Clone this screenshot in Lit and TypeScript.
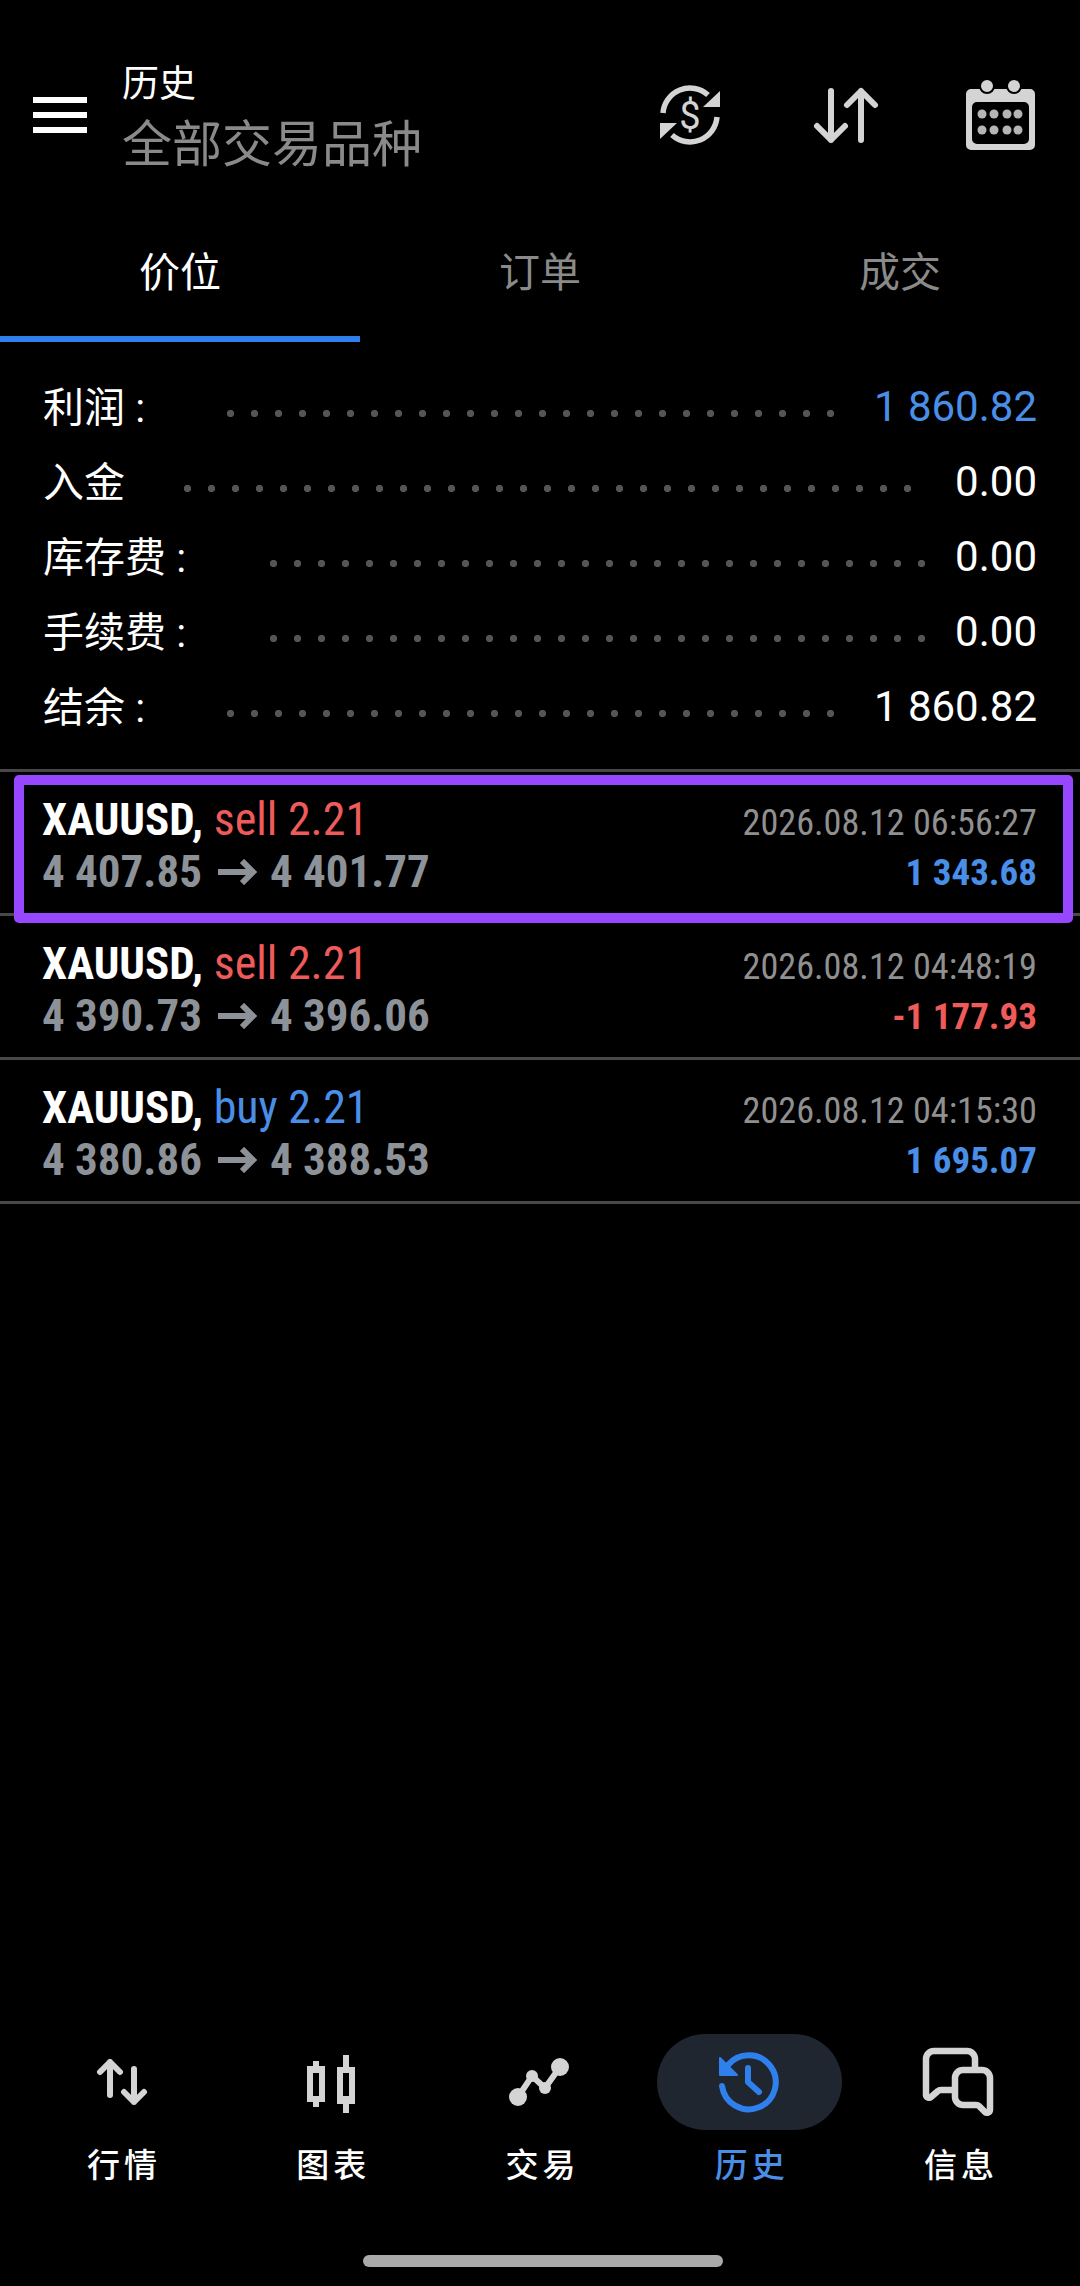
import {LitElement, html, css, svg} from "lit"
import {customElement} from "lit/decorators.js"

const stats = [
	{label: "利润 :", value: "1 860.82", blue: true, from: 227, width: 607},
	{label: "入金", value: "0.00", blue: false, from: 184, width: 727},
	{label: "库存费 :", value: "0.00", blue: false, from: 270, width: 655},
	{label: "手续费 :", value: "0.00", blue: false, from: 270, width: 655},
	{label: "结余 :", value: "1 860.82", blue: false, from: 227, width: 607},
]

const deals = [
	{side: "sell", open: "4 407.85", close: "4 401.77", time: "2026.08.12 06:56:27", profit: "1 343.68", loss: false},
	{side: "sell", open: "4 390.73", close: "4 396.06", time: "2026.08.12 04:48:19", profit: "-1 177.93", loss: true},
	{side: "buy", open: "4 380.86", close: "4 388.53", time: "2026.08.12 04:15:30", profit: "1 695.07", loss: false},
]

const tabs = ["价位", "订单", "成交"]

const navIcons = {
	quotes: svg`<path d="M14 36V3M4 13 14 3 24 13M38 10V43M28 33 38 43 48 33" fill="none" stroke="#d4d4d4" stroke-width="6" stroke-linecap="round" stroke-linejoin="round"/>`,
	charts: svg`<path fill="#d4d4d4" fill-rule="evenodd" d="M6 6H12V11H18V47H12V52H6V47H0V11H6zM6 18V41H12V18zM36 0H42V12H48V49H42V58H36V49H30V12H36zM36 18V41H42V18z"/>`,
	trade: svg`<path d="M11 41 25 20 38 32 53 11" fill="none" stroke="#d4d4d4" stroke-width="6"/><circle cx="11" cy="41" r="9" fill="#d4d4d4"/><circle cx="25" cy="20" r="6" fill="#d4d4d4"/><circle cx="38" cy="32" r="6" fill="#d4d4d4"/><circle cx="53" cy="11" r="9" fill="#d4d4d4"/>`,
	history: svg`<path d="M6 37A27 27 0 1 0 12 16" fill="none" stroke="#2f80ed" stroke-width="6" stroke-linecap="round"/><path d="M4 9V26H21z" fill="#2f80ed" stroke="#2f80ed" stroke-width="2" stroke-linejoin="round"/><path d="M32 19V33L43 43" fill="none" stroke="#2f80ed" stroke-width="6" stroke-linecap="round" stroke-linejoin="round"/>`,
	messages: svg`<path d="M55 25V14a8 8 0 0 0-8-8H14a8 8 0 0 0-8 8V50a3 3 0 0 0 5 2l7-6q1-1 3-1H35" fill="none" stroke="#d4d4d4" stroke-width="6.5" stroke-linejoin="round"/><path d="M43 25H62a8 8 0 0 1 8 8V65a3 3 0 0 1-5 2l-6-6q-1-1-3-1H43a8 8 0 0 1-8-8V33a8 8 0 0 1 8-8z" fill="none" stroke="#d4d4d4" stroke-width="6.5" stroke-linejoin="round"/>`,
}

@customElement("app-root")
export class AppRoot extends LitElement {

	static styles = css`
	:host {
		display: flex;
		flex-direction: column;
		position: relative;
		width: 1080px;
		height: 2286px;
		overflow: hidden;
		background: #000;
		color: #fff;
		font-family: Roboto, "Noto Sans CJK SC", sans-serif;
	}
	.header {
		display: flex;
		align-items: center;
		height: 120px;
		margin-top: 55px;
		padding: 0 44px 0 33px;
	}
	.menu {
		display: flex;
		flex-direction: column;
		gap: 9px;
		width: 54px;
		margin-right: 35px;
	}
	.menu span {
		height: 6px;
		background: #fff;
	}
	.titles {
		flex: 1;
		display: flex;
		flex-direction: column;
		margin-top: 6px;
	}
	.title {
		font-size: 37px;
		line-height: 54px;
	}
	.subtitle {
		font-size: 50px;
		line-height: 66px;
		color: #8a8a8a;
	}
	.actions {
		display: flex;
		align-items: center;
		gap: 85px;
	}
	.actions svg:first-child {
		margin-right: 6px;
	}
	.tabs {
		display: flex;
		height: 170px;
		margin-top: -3px;
	}
	.tab {
		flex: 1;
		display: flex;
		align-items: center;
		justify-content: center;
		padding-top: 30px;
		font-size: 41px;
		color: #8a8a8a;
		border-bottom: 6px solid transparent;
	}
	.tab.active {
		color: #fff;
		border-bottom-color: #2f80ed;
	}
	.stats {
		display: flex;
		flex-direction: column;
		padding: 27px 43px 0 43px;
		height: 430px;
		box-sizing: border-box;
		border-bottom: 3px solid #484848;
	}
	.stat {
		position: relative;
		display: flex;
		justify-content: space-between;
		align-items: center;
		height: 75px;
		font-size: 42px;
	}
	.stat .name {
		margin-bottom: 6px;
		font-size: 41px;
	}
	.stat .blue {
		color: #4a8fe7;
	}
	.dots {
		position: absolute;
		top: 41px;
		height: 7px;
		background: radial-gradient(circle at 3.5px 3.5px, #555 3.4px, transparent 3.9px) 0 0 / 24px 7px repeat-x;
	}
	.deals {
		flex: 1;
	}
	.deal {
		display: flex;
		justify-content: space-between;
		box-sizing: border-box;
		height: 144px;
		padding: 20px 43px 0 42px;
		border-bottom: 3px solid #484848;
		font-family: "Roboto Condensed", Roboto, sans-serif;
		font-stretch: 75%;
	}
	.left, .right {
		display: flex;
		flex-direction: column;
	}
	.right {
		align-items: flex-end;
	}
	.first {
		font-size: 46px;
		line-height: 54px;
	}
	.first b {
		font-size: 45px;
		font-weight: 700;
	}
	.sell {
		color: #ef5a5a;
	}
	.buy {
		color: #4a8fe7;
	}
	.prices {
		display: flex;
		align-items: center;
		font-size: 45px;
		line-height: 50px;
		font-weight: 700;
		white-space: pre;
		color: #8d9298;
	}
	.prices svg {
		margin: 0 13px 0 16px;
	}
	.time {
		font-size: 36.2px;
		line-height: 61px;
		color: #909090;
	}
	.profit {
		font-size: 37px;
		line-height: 40px;
		font-weight: 700;
		color: #4a8fe7;
	}
	.profit.loss {
		color: #ef5a5a;
	}
	.focus {
		position: absolute;
		left: 14px;
		top: 775px;
		width: 1059px;
		height: 148px;
		box-sizing: border-box;
		border: 10px solid #9747ff;
		border-radius: 5px;
		pointer-events: none;
	}
	.nav {
		display: flex;
		padding: 0 17px;
		height: 221px;
	}
	.item {
		flex: 1;
		display: flex;
		flex-direction: column;
		align-items: center;
		font-size: 33px;
		font-weight: 500;
		letter-spacing: 4px;
		color: #fff;
	}
	.item.active {
		color: #4a8fe7;
	}
	.pill {
		display: flex;
		align-items: center;
		justify-content: center;
		width: 185px;
		height: 96px;
		border-radius: 48px;
	}
	.item.active .pill {
		background: #1f2630;
	}
	.label {
		margin-top: 12px;
		padding-left: 5px;
		line-height: 48px;
	}
	.home {
		align-self: center;
		width: 360px;
		height: 12px;
		margin: 0 0 19px 6px;
		border-radius: 6px;
		background: #aaa;
	}
	`

	renderNav(id: keyof typeof navIcons, label: string, box: string, w: number, h: number, active = false) {
		return html`
			<div class="item ${active ? "active" : ""}">
				<div class=pill>
					<svg width=${w} height=${h} viewBox=${box}>${navIcons[id]}</svg>
				</div>
				<div class=label>${label}</div>
			</div>
		`
	}

	render() {
		return html`
			<div class=header>
				<div class=menu><span></span><span></span><span></span></div>
				<div class=titles>
					<div class=title>历史</div>
					<div class=subtitle>全部交易品种</div>
				</div>
				<div class=actions>
					<svg width=60 height=60 viewBox="0 0 60 60">
						<path d="M3 28A27 27 0 0 1 48 10M57 32A27 27 0 0 1 12 50" fill="none" stroke="#d4d4d4" stroke-width="5.5"/>
						<path d="M60 6V22H43zM0 54V38H17z" fill="#d4d4d4"/>
						<text x="30" y="44" text-anchor="middle" font-size="38" font-family="Roboto, sans-serif" fill="#d4d4d4">$</text>
					</svg>
					<svg width=70 height=60 viewBox="0 0 70 60">
						<path d="M20 6V55M6 41 20 55 34 41M50 55V6M36 20 50 6 64 20" fill="none" stroke="#d4d4d4" stroke-width="6" stroke-linecap="round" stroke-linejoin="round"/>
					</svg>
					<svg width=70 height=70 viewBox="0 0 70 70">
						<path fill="#d4d4d4" fill-rule="evenodd" d="M5 9H64a5 5 0 0 1 5 5V65a5 5 0 0 1-5 5H5a5 5 0 0 1-5-5V14a5 5 0 0 1 5-5zM11 22a5 5 0 0 0-5 5V59a5 5 0 0 0 5 5H58a5 5 0 0 0 5-5V27a5 5 0 0 0-5-5z"/>
						<circle cx="21" cy="6" r="7" fill="#d4d4d4" stroke="#000" stroke-width="2"/><circle cx="48" cy="6" r="7" fill="#d4d4d4" stroke="#000" stroke-width="2"/>
						${[34, 50].map(y => [16, 28, 41, 52].map(x => svg`<circle cx=${x} cy=${y} r="4.5" fill="#b5b5b5"/>`))}
					</svg>
				</div>
			</div>
			<div class=tabs>
				${tabs.map((tab, i) => html`<div class="tab ${i == 0 ? "active" : ""}">${tab}</div>`)}
			</div>
			<div class=stats>
				${stats.map(stat => html`
					<div class=stat>
						<span class=name>${stat.label}</span>
						<div class=dots style="left:${stat.from - 43}px;width:${stat.width}px"></div>
						<span class=${stat.blue ? "blue" : ""}>${stat.value}</span>
					</div>
				`)}
			</div>
			<div class=deals>
				${deals.map(deal => html`
					<div class=deal>
						<div class=left>
							<div class=first><b>XAUUSD,</b> <span class=${deal.side}>${deal.side} 2.21</span></div>
							<div class=prices>
								<span>${deal.open}</span>
								<svg width=39 height=26 viewBox="0 0 39 26"><path d="M0 13H35M24 2 35 13 24 24" fill="none" stroke="#8d9298" stroke-width="6"/></svg>
								<span>${deal.close}</span>
							</div>
						</div>
						<div class=right>
							<div class=time>${deal.time}</div>
							<div class="profit ${deal.loss ? "loss" : ""}">${deal.profit}</div>
						</div>
					</div>
				`)}
			</div>
			<div class=focus></div>
			<div class=nav>
				${this.renderNav("quotes", "行情", "0 0 52 46", 52, 46)}
				${this.renderNav("charts", "图表", "0 -4 48 62", 48, 62)}
				${this.renderNav("trade", "交易", "0 0 66 52", 66, 52)}
				${this.renderNav("history", "历史", "0 0 66 66", 66, 66, true)}
				${this.renderNav("messages", "信息", "0 0 76 74", 76, 74)}
			</div>
			<div class=home></div>
		`
	}
}
